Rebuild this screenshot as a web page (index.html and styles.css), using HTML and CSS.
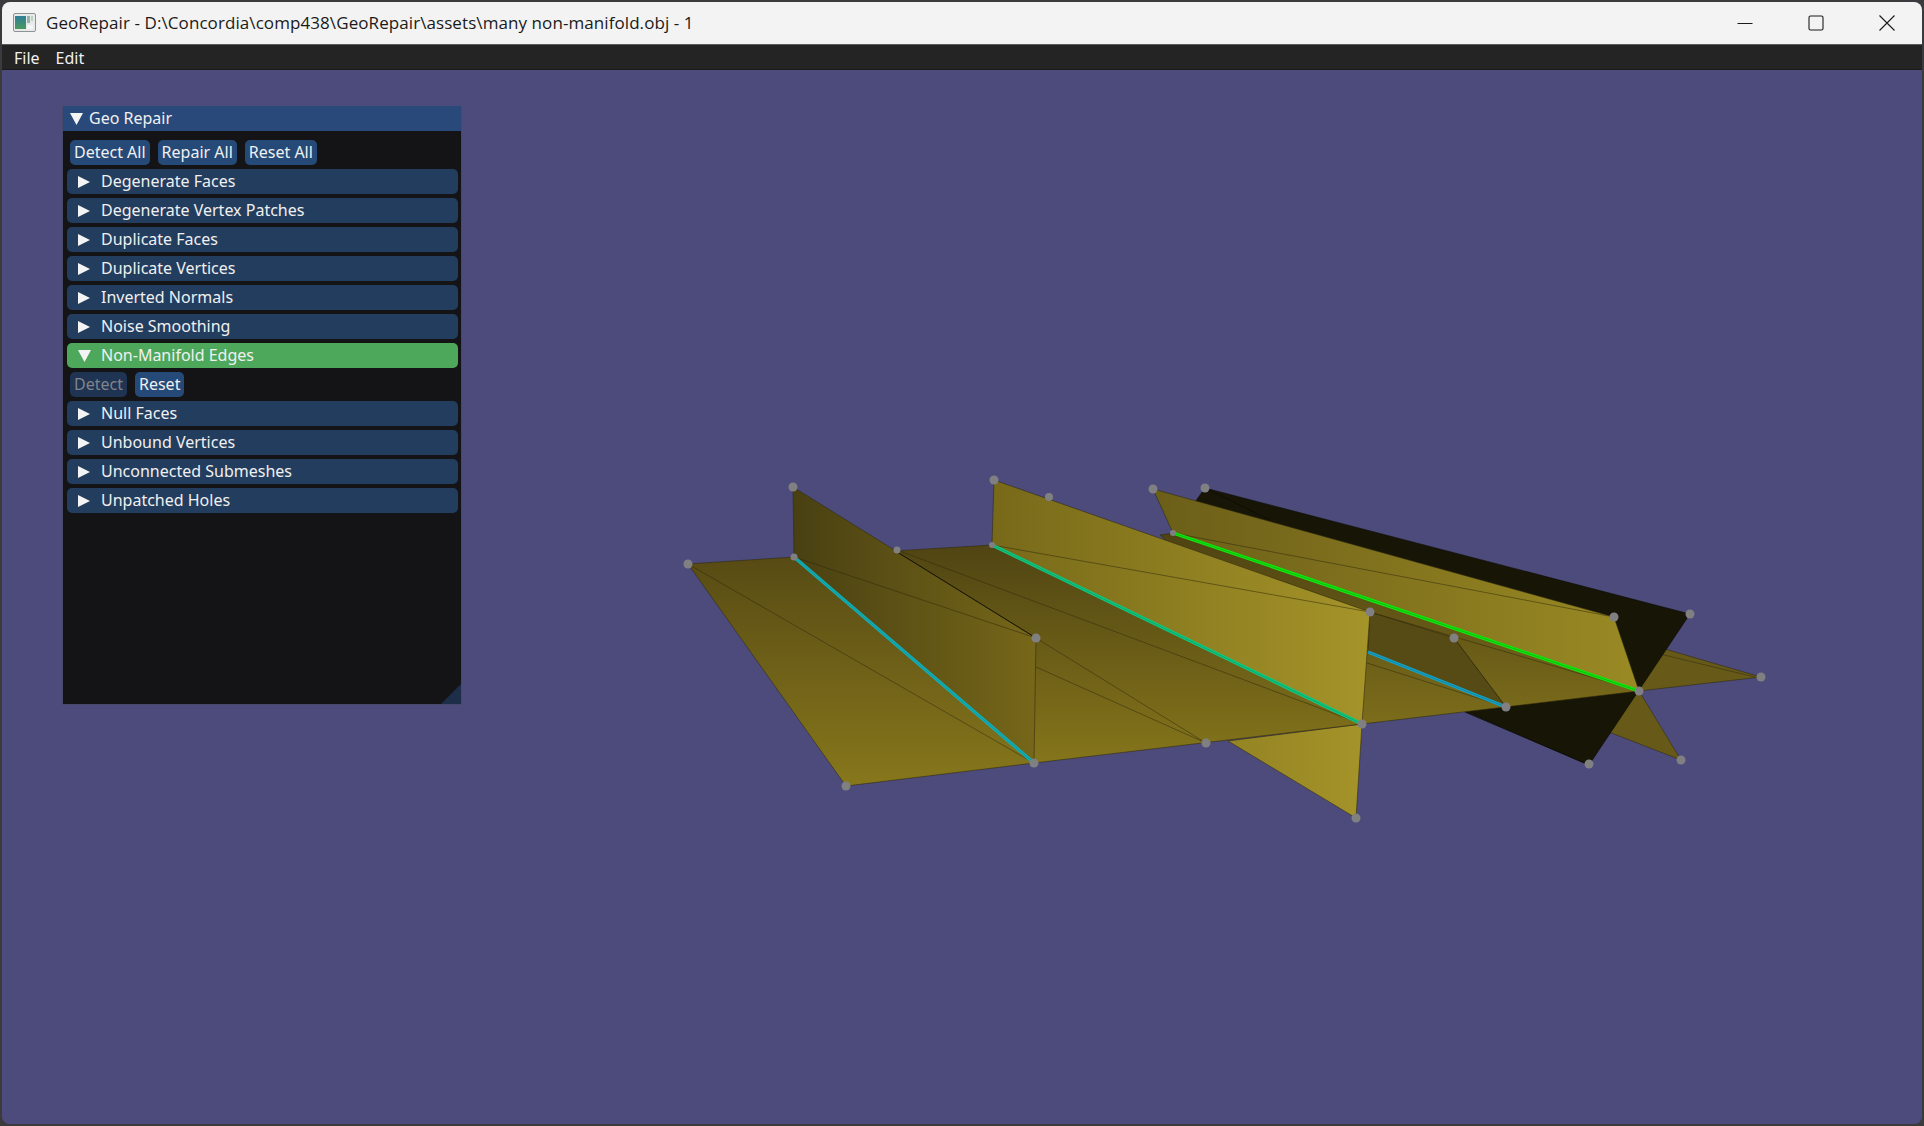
FILE: index.html
```html
<!DOCTYPE html>
<html lang="en">
<head>
<meta charset="utf-8">
<title>GeoRepair</title>
<link rel="stylesheet" href="styles.css">
</head>
<body>
<div class="window">
  <header class="titlebar">
    <svg class="app-icon" viewBox="0 0 23 19" width="23" height="19">
      <defs>
        <linearGradient id="iconGrad" x1="0" y1="0" x2="0" y2="1">
          <stop offset="0" stop-color="#2f7f9a"/>
          <stop offset="1" stop-color="#4a9a5c"/>
        </linearGradient>
      </defs>
      <rect x="0.5" y="0.5" width="22" height="18" rx="1.5" fill="#e8eaea" stroke="#8d9294"/>
      <rect x="2" y="3" width="11" height="13" fill="url(#iconGrad)"/>
      <rect x="14" y="3" width="3" height="7" fill="#8fb8a4"/>
      <rect x="18" y="3" width="2" height="5" fill="#bcd0c8"/>
      <rect x="14" y="12" width="6" height="4" fill="#f6f6f6"/>
    </svg>
    <span class="title-text">GeoRepair - D:\Concordia\comp438\GeoRepair\assets\many non-manifold.obj - 1</span>
    <div class="controls">
      <svg class="ctl" viewBox="0 0 16 16" width="16" height="16"><path d="M0.5 8.5H15.5"/></svg>
      <svg class="ctl" viewBox="0 0 16 16" width="16" height="16"><rect x="1" y="1" width="14" height="14" rx="1.5"/></svg>
      <svg class="ctl" viewBox="0 0 16 16" width="16" height="16"><path d="M0.5 0.5L15.5 15.5M15.5 0.5L0.5 15.5"/></svg>
    </div>
  </header>
  <nav class="menubar"><span>File</span><span>Edit</span></nav>
  <main class="viewport">
    <svg class="scene" viewBox="2 70 1920 1054" preserveAspectRatio="none">
      <defs>
        <linearGradient id="floor1" gradientUnits="userSpaceOnUse" x1="0" y1="557" x2="0" y2="786">
          <stop offset="0" stop-color="#574b14"/><stop offset="1" stop-color="#87771c"/>
        </linearGradient>
        <linearGradient id="floor2" gradientUnits="userSpaceOnUse" x1="0" y1="545" x2="0" y2="763">
          <stop offset="0" stop-color="#504513"/><stop offset="1" stop-color="#85751b"/>
        </linearGradient>
        <linearGradient id="floor3" gradientUnits="userSpaceOnUse" x1="0" y1="533" x2="0" y2="724">
          <stop offset="0" stop-color="#4e4312"/><stop offset="1" stop-color="#7c6d1b"/>
        </linearGradient>
        <linearGradient id="wall1" gradientUnits="userSpaceOnUse" x1="793" y1="0" x2="1036" y2="0">
          <stop offset="0" stop-color="#494012"/><stop offset="1" stop-color="#766719"/>
        </linearGradient>
        <linearGradient id="wall2" gradientUnits="userSpaceOnUse" x1="992" y1="0" x2="1370" y2="0">
          <stop offset="0" stop-color="#776919"/><stop offset="1" stop-color="#a59429"/>
        </linearGradient>
        <linearGradient id="wall3" gradientUnits="userSpaceOnUse" x1="1153" y1="0" x2="1639" y2="0">
          <stop offset="0" stop-color="#6b5e18"/><stop offset="1" stop-color="#9a8a24"/>
        </linearGradient>
      </defs>

      <polygon class="face fan" points="1400,572 1761,677 1639,691"/>
      <line class="mesh" x1="1660" y1="654" x2="1755" y2="677"/>
      <polygon class="face fan" points="1639,691 1681,760 1560,713"/>
      <polygon class="face black" points="1205,488 1690,614 1589,765 1300,640 1173,533"/>
      <line class="mesh strong" x1="1205" y1="488" x2="1270" y2="520"/>
      <line class="mesh strong" x1="1465" y1="712" x2="1589" y2="765"/>

      <polygon class="face f3" points="1160,535 1173,533 1639,691 1362,724"/>
      <polygon class="face w4" points="1370,612 1454,638 1506,707 1368,652"/>
      <line class="mesh" x1="1370" y1="612" x2="1639" y2="691"/>
      <line class="mesh" x1="1454" y1="638" x2="1506" y2="707"/>
      <line class="mesh" x1="1367" y1="663" x2="1506" y2="707"/>
      <line class="edge blue" x1="1368" y1="652" x2="1506" y2="707"/>
      <line class="core blue-core" x1="1368" y1="652" x2="1506" y2="707"/>

      <polygon class="face w3" points="1153,489 1173,533 1639,691 1614,617"/>
      <line class="mesh" x1="1173" y1="533" x2="1614" y2="617"/>
      <line class="edge green" x1="1173" y1="533" x2="1639" y2="691"/>
      <line class="core green-core" x1="1173" y1="533" x2="1639" y2="691"/>

      <polygon class="face w2low" points="1362,724 1356,818 1228,741"/>
      <polygon class="face f2" points="794,557 992,545 1362,724 1034,763"/>
      <line class="mesh" x1="897" y1="550" x2="1362" y2="724"/>
      <line class="mesh" x1="1036" y1="638" x2="1206" y2="743"/>
      <line class="mesh" x1="1036" y1="667" x2="1206" y2="743"/>

      <polygon class="face w2" points="994,480 992,545 1362,724 1370,612"/>
      <line class="mesh" x1="992" y1="545" x2="1370" y2="612"/>
      <line class="edge teal" x1="992" y1="545" x2="1362" y2="724"/>
      <line class="core teal-core" x1="992" y1="545" x2="1362" y2="724"/>

      <polygon class="face f1" points="688,564 794,557 1034,763 846,786"/>
      <polygon class="face w1" points="793,487 794,557 1034,763 1036,638"/>
      <line class="mesh" x1="688" y1="564" x2="1034" y2="763"/>
      <line class="mesh" x1="794" y1="557" x2="1036" y2="638"/>
      <line class="mesh strong" x1="897" y1="552" x2="1036" y2="638"/>
      <line class="edge cyan" x1="794" y1="557" x2="1034" y2="763"/>
      <line class="core cyan-core" x1="794" y1="557" x2="1034" y2="763"/>

      <g class="dots">
        <circle cx="688" cy="564" r="4.5"/><circle cx="793" cy="487" r="4.5"/><circle cx="794" cy="557" r="3.5"/>
        <circle cx="1036" cy="638" r="4.5"/><circle cx="1034" cy="763" r="4.5"/><circle cx="846" cy="786" r="4.5"/>
        <circle cx="897" cy="550" r="3.5"/><circle cx="994" cy="480" r="4.5"/><circle cx="1049" cy="497" r="4"/>
        <circle cx="992" cy="545" r="3"/><circle cx="1153" cy="489" r="4.5"/><circle cx="1205" cy="488" r="4.5"/>
        <circle cx="1173" cy="533" r="3"/><circle cx="1370" cy="612" r="4.5"/><circle cx="1362" cy="724" r="4.5"/>
        <circle cx="1454" cy="638" r="4.5"/><circle cx="1506" cy="707" r="4.5"/><circle cx="1206" cy="743" r="4.5"/>
        <circle cx="1356" cy="818" r="4.5"/><circle cx="1589" cy="764" r="4.5"/><circle cx="1614" cy="617" r="4.5"/>
        <circle cx="1690" cy="614" r="4.5"/><circle cx="1761" cy="677" r="4.5"/><circle cx="1639" cy="691" r="4.5"/>
        <circle cx="1681" cy="760" r="4.5"/>
      </g>
    </svg>

    <section class="panel">
      <div class="panel-title">
        <svg class="tri" viewBox="0 0 13 12" width="13" height="12"><polygon points="0,0 13,0 6.5,12"/></svg>
        <span>Geo Repair</span>
      </div>
      <div class="panel-body">
        <div class="btn-row">
          <button class="btn">Detect All</button>
          <button class="btn">Repair All</button>
          <button class="btn">Reset All</button>
        </div>
        <div class="node"><svg class="tri" viewBox="0 0 12 12" width="12" height="12"><polygon points="0,0 12,6 0,12"/></svg><span>Degenerate Faces</span></div>
        <div class="node"><svg class="tri" viewBox="0 0 12 12" width="12" height="12"><polygon points="0,0 12,6 0,12"/></svg><span>Degenerate Vertex Patches</span></div>
        <div class="node"><svg class="tri" viewBox="0 0 12 12" width="12" height="12"><polygon points="0,0 12,6 0,12"/></svg><span>Duplicate Faces</span></div>
        <div class="node"><svg class="tri" viewBox="0 0 12 12" width="12" height="12"><polygon points="0,0 12,6 0,12"/></svg><span>Duplicate Vertices</span></div>
        <div class="node"><svg class="tri" viewBox="0 0 12 12" width="12" height="12"><polygon points="0,0 12,6 0,12"/></svg><span>Inverted Normals</span></div>
        <div class="node"><svg class="tri" viewBox="0 0 12 12" width="12" height="12"><polygon points="0,0 12,6 0,12"/></svg><span>Noise Smoothing</span></div>
        <div class="node node-active"><svg class="tri" viewBox="0 0 13 12" width="13" height="12"><polygon points="0,0 13,0 6.5,12"/></svg><span>Non-Manifold Edges</span></div>
        <div class="btn-row">
          <button class="btn btn-disabled">Detect</button>
          <button class="btn">Reset</button>
        </div>
        <div class="node"><svg class="tri" viewBox="0 0 12 12" width="12" height="12"><polygon points="0,0 12,6 0,12"/></svg><span>Null Faces</span></div>
        <div class="node"><svg class="tri" viewBox="0 0 12 12" width="12" height="12"><polygon points="0,0 12,6 0,12"/></svg><span>Unbound Vertices</span></div>
        <div class="node"><svg class="tri" viewBox="0 0 12 12" width="12" height="12"><polygon points="0,0 12,6 0,12"/></svg><span>Unconnected Submeshes</span></div>
        <div class="node"><svg class="tri" viewBox="0 0 12 12" width="12" height="12"><polygon points="0,0 12,6 0,12"/></svg><span>Unpatched Holes</span></div>
      </div>
      <div class="grip"></div>
    </section>
  </main>
</div>
</body>
</html>
```

FILE: styles.css
```css
* { box-sizing: border-box; }
html, body { height: 100%; }
body {
  margin: 0;
  padding: 2px;
  background: #3b3a3c;
  overflow: hidden;
  font-family: "Noto Sans", "Open Sans", sans-serif;
}
.window {
  height: 100%;
  display: flex;
  flex-direction: column;
  border-radius: 8px;
  overflow: hidden;
  background: #4c4b7c;
}
.titlebar {
  flex: 0 0 43px;
  display: flex;
  align-items: center;
  padding: 0 0 1px 11px;
  background: #f3f3f3;
  border-bottom: 1px solid #5a5a5a;
  color: #1a1a1a;
}
.app-icon { flex: none; margin-right: 10px; }
.title-text { font-family: "Open Sans", "Noto Sans", sans-serif; font-size: 17px; letter-spacing: 0.08px; }
.controls {
  margin-left: auto;
  display: flex;
  gap: 55px;
  padding-right: 27px;
}
.ctl { fill: none; stroke: #1a1a1a; stroke-width: 1.1; }
.menubar {
  flex: 0 0 25px;
  display: flex;
  align-items: center;
  gap: 16px;
  padding: 1px 0 0 12px;
  background: #242424;
  border-bottom: 1px solid #1a1a1a;
  color: #f0f0f0;
  font-size: 16px;
}
.viewport {
  flex: 1;
  position: relative;
  padding: 36px 0 0 60px;
  background: #4c4b7c;
}
.scene { position: absolute; inset: 0; width: 100%; height: 100%; }

.face { stroke: #2e280c; stroke-width: 1; stroke-opacity: .55; stroke-linejoin: round; }
.fan { fill: #675a18; }
.black { fill: #171506; stroke: #0d0c04; }
.f1 { fill: url(#floor1); }
.f2 { fill: url(#floor2); }
.f3 { fill: url(#floor3); }
.w1 { fill: url(#wall1); }
.w2, .w2low { fill: url(#wall2); }
.w3 { fill: url(#wall3); }
.w4 { fill: #574b15; }
.mesh { stroke: #2e280c; stroke-width: 1; stroke-opacity: .5; }
.mesh.strong { stroke: #0f0d04; stroke-opacity: .85; }
.edge { stroke-width: 3.4; }
.core { stroke-width: 1; }
.cyan { stroke: #12aeb6; }
.cyan-core { stroke: #0b9aa0; }
.blue { stroke: #16a2c4; }
.blue-core { stroke: #0f88a6; }
.teal { stroke: #0fc880; }
.teal-core { stroke: #0aa86c; }
.green { stroke: #10e810; }
.green-core { stroke: #0cc008; }
.dots circle { fill: #808083; }

.panel {
  position: relative;
  width: 400px;
  height: 599px;
  display: flex;
  flex-direction: column;
  background: #141416;
  border: 1px solid #454a6a;
  color: #f0f0f0;
  font-size: 16px;
  line-height: 25px;
}
.panel-title {
  flex: 0 0 24px;
  margin-top: -1px;
  display: flex;
  align-items: center;
  gap: 6px;
  padding-left: 7px;
  background: #29497a;
}
.tri { flex: none; fill: #f4f4f4; }
.panel-body {
  display: flex;
  flex-direction: column;
  gap: 4px;
  padding: 9px 3px 0 4px;
}
.btn-row { display: flex; gap: 8px; padding-left: 3px; }
.btn {
  height: 25px;
  padding: 0 4px;
  border: 0;
  border-radius: 5px;
  background: #264a78;
  color: #f0f0f0;
  font: inherit;
  line-height: 25px;
}
.btn-disabled { background: #1f3352; color: #80858c; }
.node {
  height: 25px;
  display: flex;
  align-items: center;
  gap: 11px;
  padding-left: 11px;
  border-radius: 5px;
  background: #233d5f;
}
.node-active { background: #4ea85c; }
.node-active .tri { margin-right: -1px; }
.grip {
  position: absolute;
  right: 0;
  bottom: 0;
  width: 20px;
  height: 20px;
  background: #1d2f48;
  clip-path: polygon(100% 0, 100% 100%, 0 100%);
}
```
